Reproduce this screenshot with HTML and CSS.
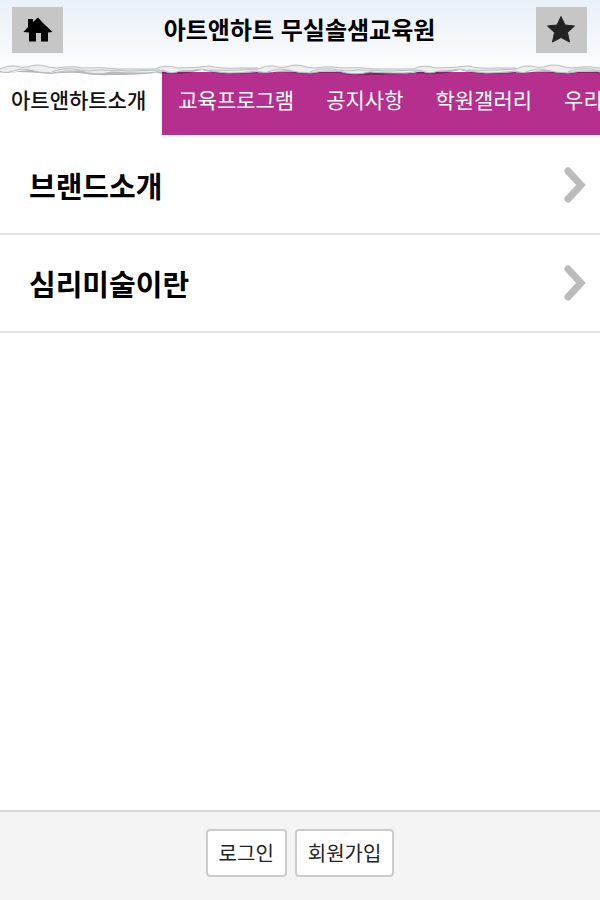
FILE: index.html
```html
<!DOCTYPE html>
<html lang="ko">
<head>
  <meta charset="UTF-8">
  <meta name="viewport" content="width=device-width, initial-scale=1.0">
  <title>아트앤하트 무실솔샘교육원</title>
  <link rel="stylesheet" href="styles.css">
</head>
<body>

  <!-- Header -->
  <header class="header">
    <a href="#" class="icon-button" aria-label="홈">
      <svg width="30" height="26" viewBox="0 0 30 26" aria-hidden="true">
        <path fill="#000" d="M15 0.500 L20 6 L29.500 15 L25 15.500 V24.500 H18 V16 H13 V24.500 H6 V15.500 L0.500 15 L5 10 V2 H10 V5 Z"/>
      </svg>
    </a>
    <h1 class="title">아트앤하트 무실솔샘교육원</h1>
    <button type="button" class="icon-button" aria-label="즐겨찾기">
      <svg width="30" height="28" viewBox="0 0 30 28" aria-hidden="true">
        <path fill="#222" stroke="#222" stroke-width="1" stroke-linejoin="round" d="M14 0.500 L18 9 L27.500 10 L20.500 16.500 L22.500 26 L14 21.500 L5.500 26 L7.500 16.500 L0.500 10 L10 9 Z"/>
      </svg>
    </button>

    <!-- Torn paper edge over the tabs -->
    <svg class="torn-edge" width="100%" height="14" aria-hidden="true">
      <defs>
        <pattern id="torn" width="258" height="14" patternUnits="userSpaceOnUse">
          <path fill="#200018" fill-opacity="0.3" d="M0 6 H258 V9 Q240 10 228 10 Q212 9 202 6 Q190 9 180 10 Q165 10 155 9 Q140 11 110 11 Q95 12 80 9 Q65 8 50 10 Q30 8 18 8 Q8 9 0 8 Z"/>
          <path fill="#eceff0" d="M0 5 Q8 1 15 2 Q22 4 28 3 Q38 -1 48 3 Q56 5 65 3 Q75 2 82 4 Q100 3 120 5 L155 5 Q165 0 178 4 Q195 4 210 2 Q220 5 240 4 L258 4 V8 Q240 9 228 9 Q212 8 202 5 Q188 6 180 7 Q171 11 163 7 Q154 10 145 9 Q125 9 112 8 Q96 12 80 7 Q65 7 52 9 Q40 9 30 6 L20 7 Q8 10 0 7 Z"/>
          <g fill="none" stroke="#b7bdbd" stroke-width="1">
            <path d="M0 5 Q8 1 15 2 Q22 4 28 3 Q38 -1 48 3 Q56 5 65 3 Q75 2 82 4 Q100 3 120 5 L155 5 Q165 0 178 4 Q195 4 210 2 Q220 5 240 4 L258 4"/>
            <path d="M0 8 Q8 10 16 6 Q22 4 30 6 Q40 9 52 9 Q65 6 80 7 Q96 12 112 8 Q125 9 145 9 Q156 9 163 6 Q171 11 180 7 Q190 7 202 5 Q212 8 228 9 Q242 9 258 7"/>
            <path d="M52 8 Q60 4 75 5 Q85 8 100 6 Q130 8 160 6 M210 6 Q230 7 258 5"/>
          </g>
        </pattern>
      </defs>
      <rect width="100%" height="14" fill="url(#torn)"/>
    </svg>
  </header>

  <!-- Tab menu -->
  <nav class="tabs">
    <a href="#" class="tab active">아트앤하트소개</a>
    <a href="#" class="tab">교육프로그램</a>
    <a href="#" class="tab">공지사항</a>
    <a href="#" class="tab">학원갤러리</a>
    <a href="#" class="tab">우리</a>
  </nav>

  <!-- Sub menu -->
  <main class="content">
    <ul class="menu-list">
      <li>
        <a href="#" class="menu-item">브랜드소개
          <svg width="24" height="36" viewBox="0 0 24 36" aria-hidden="true"><path d="M5 4 L18 18 L5 32"/></svg>
        </a>
      </li>
      <li>
        <a href="#" class="menu-item">심리미술이란
          <svg width="24" height="36" viewBox="0 0 24 36" aria-hidden="true"><path d="M5 4 L18 18 L5 32"/></svg>
        </a>
      </li>
    </ul>
  </main>

  <!-- Footer -->
  <footer class="footer">
    <button type="button" class="footer-button">로그인</button>
    <button type="button" class="footer-button">회원가입</button>
  </footer>

</body>
</html>
```

FILE: styles.css
```css
* {
  box-sizing: border-box;
}

body {
  margin: 0;
  min-height: 100vh;
  display: flex;
  flex-direction: column;
  background-color: #fff;
  color: #000;
  font-family: "Noto Sans CJK KR", sans-serif;
}

a {
  color: inherit;
  text-decoration: none;
}

/* Header */
.header {
  position: relative;
  display: flex;
  justify-content: space-between;
  align-items: flex-start;
  padding: 7px 13px 19px 12px;
  background: linear-gradient(#e9f0f7, #fcfdfe);
}

.icon-button {
  display: flex;
  justify-content: center;
  align-items: center;
  width: 51px;
  height: 46px;
  padding: 0;
  border: none;
  background-color: #c6c6c6;
  cursor: pointer;
}

.title {
  margin: 0;
  font-size: 24px;
  line-height: 44px;
  font-weight: 700;
  white-space: nowrap;
}

.torn-edge {
  position: absolute;
  bottom: -6px;
  left: 0;
}

/* Tabs */
.tabs {
  display: flex;
  overflow-x: auto;
  scrollbar-width: none;
  background-color: #b52f8e;
}

.tab {
  flex: none;
  padding: 8px 16px 17px;
  color: #fff;
  font-size: 21px;
  line-height: 38px;
  white-space: nowrap;
}

.tab.active {
  padding-left: 11px;
  background-color: #fff;
  color: #111;
  font-weight: 500;
}

/* Sub menu */
.content {
  flex: 1;
  padding-top: 2px;
}

.menu-list {
  margin: 0;
  padding: 0;
  list-style: none;
}

.menu-item {
  display: flex;
  justify-content: space-between;
  align-items: center;
  padding: 0 13px 0 29px;
  border-bottom: 2px solid #e4e4e4;
  font-size: 29px;
  line-height: 96px;
  font-weight: 700;
}

.menu-item svg {
  fill: none;
  stroke: #bbb;
  stroke-width: 7;
  stroke-linecap: round;
}

/* Footer */
.footer {
  display: flex;
  justify-content: center;
  gap: 8px;
  padding: 17px 0 23px;
  border-top: 2px solid #d9d9d9;
  background-color: #f4f4f4;
}

.footer-button {
  padding: 0 11px;
  border: 2px solid #ccc;
  border-radius: 4px;
  background-color: #fff;
  color: #222;
  font-family: inherit;
  font-size: 20px;
  line-height: 44px;
  cursor: pointer;
}
```
